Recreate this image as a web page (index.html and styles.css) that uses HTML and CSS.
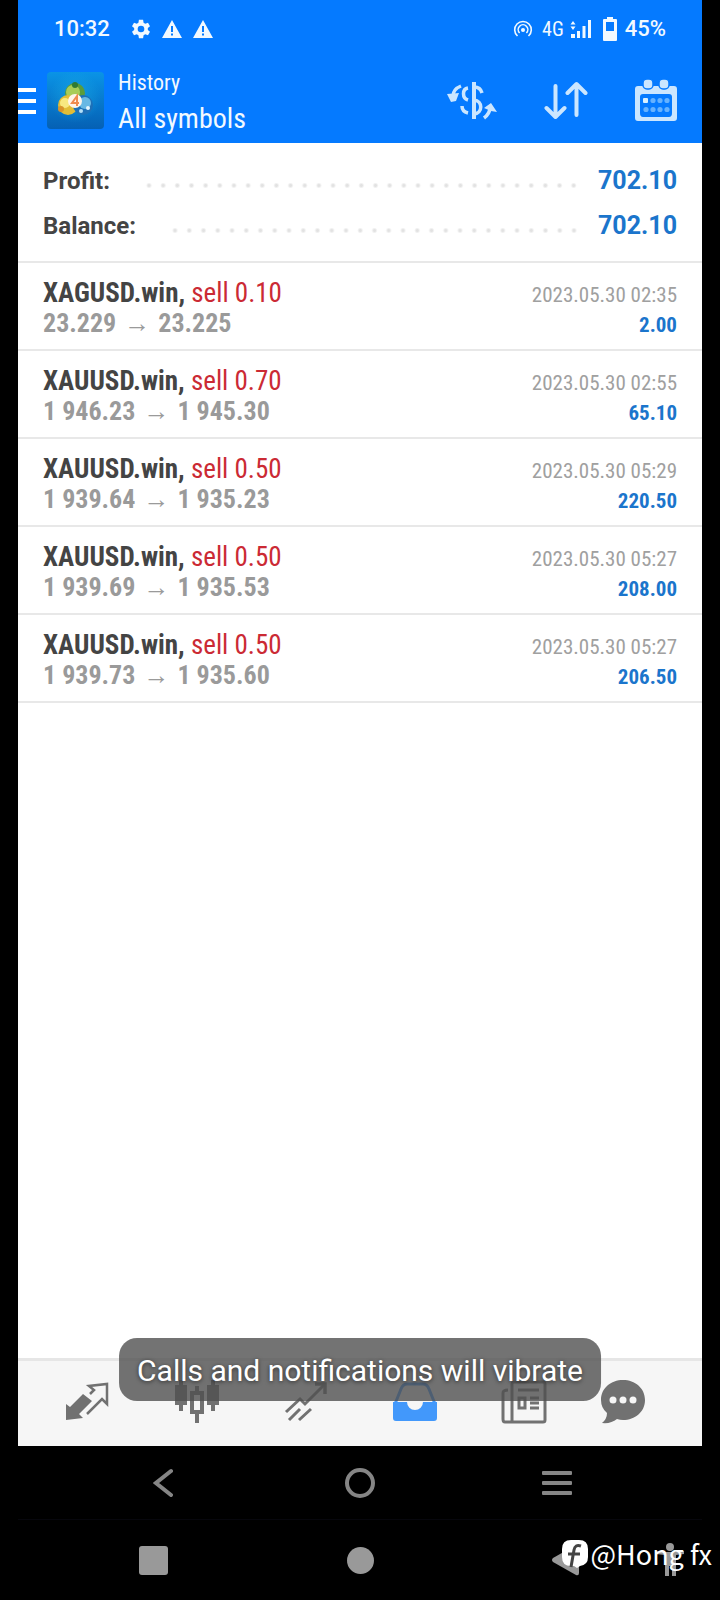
FILE: index.html
```html
<!DOCTYPE html>
<html lang="en">
<head>
<meta charset="utf-8">
<meta name="viewport" content="width=device-width, initial-scale=1">
<title>History</title>
<link rel="stylesheet" href="styles.css">
</head>
<body>
<div class="screen">
  <header class="top">
    <div class="status">
      <span class="clock">10:32</span>
      <svg class="gear" width="20" height="20" viewBox="0 0 24 24"><path fill="currentColor" fill-rule="evenodd" d="M9.500 1h5l.6 3.400 2 1.200 3.300-1.200 2.400 4.200-2.600 2.200v2.400l2.600 2.200-2.400 4.200-3.300-1.200-2 1.200-.6 3.400h-5l-.6-3.400-2-1.200-3.300 1.200-2.400-4.200 2.600-2.200v-2.400L1.200 8.600l2.400-4.200 3.300 1.200 2-1.200zM12 8a4 4 0 1 0 0 8 4 4 0 0 0 0-8z"/></svg>
      <svg class="warn" width="20" height="18" viewBox="0 0 20 18"><path fill="currentColor" fill-rule="evenodd" d="M10 0l10 18H0zM9 6v6h2V6zm0 7.500v2h2v-2z"/></svg>
      <svg class="warn" width="20" height="18" viewBox="0 0 20 18"><path fill="currentColor" fill-rule="evenodd" d="M10 0l10 18H0zM9 6v6h2V6zm0 7.500v2h2v-2z"/></svg>
      <span class="fill"></span>
      <svg width="20" height="18" viewBox="0 0 20 18" fill="none" stroke="currentColor" stroke-width="1.600"><path d="M4.500 16A8.300 8.300 0 1 1 15.500 16M6.600 13A4.800 4.800 0 1 1 13.400 13"/><circle cx="10" cy="10" r="2" fill="currentColor" stroke="none"/></svg>
      <span class="network">4G</span>
      <svg width="22" height="20" viewBox="0 0 22 20" fill="currentColor"><path d="M3 2l2.500 3.500h-5zM3 11L.5 7.500h5zM1 15h4v4H1zM7 12h3v7H7zM12.500 7h3v12h-3zM18 1h3v18h-3z"/></svg>
      <svg class="battery" width="16" height="24" viewBox="0 0 16 24"><path fill="currentColor" fill-rule="evenodd" d="M5 0h6v2h3q1 0 1 1v20q0 1-1 1H2q-1 0-1-1V3q0-1 1-1h3zM4 5v9h8V5z"/></svg>
      <span class="clock">45%</span>
    </div>
    <div class="appbar">
      <button class="icon-button" aria-label="Menu"><svg width="18" height="28" viewBox="0 0 18 28" fill="#fff"><path d="M0 1h18v4H0zM0 12h18v4H0zM0 23h18v4H0z"/></svg></button>
      <svg class="logo" width="57" height="57" viewBox="0 0 57 57">
        <defs>
          <linearGradient id="sky" x1="0" y1="0" x2="0" y2="1"><stop offset="0" stop-color="#0a94e6"/><stop offset="1" stop-color="#0560b4"/></linearGradient>
          <radialGradient id="glow"><stop offset="0" stop-color="#20b8e8"/><stop offset="1" stop-color="#20b8e8" stop-opacity="0"/></radialGradient>
        </defs>
        <rect width="57" height="57" rx="4" fill="url(#sky)"/>
        <circle cx="28" cy="25" r="26" fill="url(#glow)" opacity=".5"/>
        <circle cx="28" cy="21" r="10" fill="#5a9c3c"/><circle cx="26" cy="20" r="7" fill="#a8cc58"/><circle cx="28" cy="13" r="3" fill="#2f7a35"/>
        <circle cx="21" cy="33" r="10" fill="#e2bd36"/><circle cx="18" cy="31" r="5" fill="#f8e880"/><circle cx="14" cy="37" r="3" fill="#d8942c"/>
        <circle cx="36" cy="33" r="10" fill="#1d70b8"/><circle cx="38" cy="31" r="6" fill="#68b8e4"/><circle cx="41" cy="36" r="2" fill="#e4f6ff"/><circle cx="34" cy="39" r="2" fill="#b4e0f8"/>
        <circle cx="28" cy="29" r="7" fill="#fff4ea"/><path d="M30 34V24l-5 7h7" fill="none" stroke="#f08a50" stroke-width="2"/>
      </svg>
      <div class="titles"><span class="overline">History</span><h1 class="title">All symbols</h1></div>
      <div class="actions">
        <button class="icon-button" aria-label="Currency"><svg width="50" height="40" viewBox="0 0 50 40" fill="none" stroke="#cbe6ff" stroke-width="3.500"><path stroke-width="4" d="M27 1v37"/><path d="M27 6c5 0 7 2 8 6M27 19c9 1 9 13 0 14M21 7c-6 1-6 10 0 12M15 25c0 4 2 6 6 7"/><path d="M14 5C9 7 6 10 6 15M37 37c4-3 6-6 6-11"/><path fill="#cbe6ff" stroke="none" d="M0 13l12-1-3 8-5 1zM37 27l7-5 6 9-6-1z"/></svg></button>
        <button class="icon-button sort" aria-label="Sort"><svg width="44" height="40" viewBox="0 0 44 40" fill="none" stroke="#cbe6ff" stroke-width="4" stroke-linecap="round" stroke-linejoin="round"><path d="M11.500 5v31M2.500 27l9 9 9-9M32.500 34V4M23.500 12l9-9 9 9"/></svg></button>
        <button class="icon-button" aria-label="Select dates"><svg width="42" height="44" viewBox="0 0 42 44"><path fill="#cbe6ff" fill-rule="evenodd" d="M3 7h36q3 0 3 3v29q0 3-3 3H3q-3 0-3-3V10q0-3 3-3zM8 15q-3 0-3 3v16q0 4 3 4h26q3 0 3-4V18q0-3-3-3z"/><rect x="8" y="0" width="10" height="10" rx="4" fill="#cbe6ff" stroke="#057aff" stroke-width="1.500"/><rect x="24" y="0" width="10" height="10" rx="4" fill="#cbe6ff" stroke="#057aff" stroke-width="1.500"/><g fill="#66b2ff"><rect x="8" y="19" width="5" height="5" rx="1" fill="#d8f0ff"/><circle cx="18" cy="21.500" r="2.600"/><circle cx="25" cy="21.500" r="2.600"/><circle cx="32" cy="21.500" r="2.600"/><circle cx="11" cy="30.500" r="2.600"/><circle cx="18" cy="30.500" r="2.600"/><circle cx="25" cy="30.500" r="2.600"/><circle cx="32" cy="30.500" r="2.600"/></g></svg></button>
      </div>
    </div>
  </header>

  <main class="content">
    <dl class="summary">
      <div class="total"><dt>Profit:</dt><dd class="dots"></dd><dd class="sum">702.10</dd></div>
      <div class="total"><dt>Balance:</dt><dd class="dots"></dd><dd class="sum">702.10</dd></div>
    </dl>
    <ul class="deals">
      <li class="deal"><span class="symbol"><b>XAGUSD.win,</b> <span class="side">sell 0.10</span></span><time class="time">2023.05.30 02:35</time><span class="prices">23.229 <span class="arrow">→</span> 23.225</span><span class="gain">2.00</span></li>
      <li class="deal"><span class="symbol"><b>XAUUSD.win,</b> <span class="side">sell 0.70</span></span><time class="time">2023.05.30 02:55</time><span class="prices">1 946.23 <span class="arrow">→</span> 1 945.30</span><span class="gain">65.10</span></li>
      <li class="deal"><span class="symbol"><b>XAUUSD.win,</b> <span class="side">sell 0.50</span></span><time class="time">2023.05.30 05:29</time><span class="prices">1 939.64 <span class="arrow">→</span> 1 935.23</span><span class="gain">220.50</span></li>
      <li class="deal"><span class="symbol"><b>XAUUSD.win,</b> <span class="side">sell 0.50</span></span><time class="time">2023.05.30 05:27</time><span class="prices">1 939.69 <span class="arrow">→</span> 1 935.53</span><span class="gain">208.00</span></li>
      <li class="deal"><span class="symbol"><b>XAUUSD.win,</b> <span class="side">sell 0.50</span></span><time class="time">2023.05.30 05:27</time><span class="prices">1 939.73 <span class="arrow">→</span> 1 935.60</span><span class="gain">206.50</span></li>
    </ul>
  </main>

  <nav class="tabs">
    <button class="icon-button" aria-label="Quotes"><svg width="46" height="40" viewBox="0 0 46 40"><path fill="#717171" d="M1 38V22l4 3L18 12l9 7-13 13 4 4z"/><path fill="none" stroke="#717171" stroke-width="2.500" d="M22 32l15-15 5 5V2L24 4l5 4-4 4"/></svg></button>
    <button class="icon-button" aria-label="Chart"><svg width="46" height="46" viewBox="0 0 46 46" fill="#717171"><path d="M5 1h4v5h4v20H9v6H5v-6H1V6h4zM37 1h4v5h4v20h-4v6h-4v-6h-4V6h4z"/><path fill-rule="evenodd" d="M21 7h4v5h5v23h-5v9h-4v-9h-5V12h5zM20 16v15h6V16z"/></svg></button>
    <button class="icon-button" aria-label="Trade"><svg width="44" height="40" viewBox="0 0 44 40" fill="none" stroke="#717171" stroke-width="3"><path d="M2 30l14-13 5 5L40 3M5 38l11-11M15 38l12-11"/><path d="M31 2h10v10" stroke-width="3.500"/></svg></button>
    <button class="icon-button" aria-label="History"><svg width="44" height="40" viewBox="0 0 44 40"><path d="M2 22L8 7q2-5 6-5h16q4 0 6 5l6 15" fill="none" stroke="#4298fb" stroke-width="3"/><path fill="#4298fb" d="M0 20h14a8 8 0 0 0 16 0h14v16q0 3-3 3H3q-3 0-3-3z"/></svg></button>
    <button class="icon-button" aria-label="News"><svg width="46" height="44" viewBox="0 0 46 44" fill="none" stroke="#717171" stroke-width="3"><path d="M11 42H4q-2 0-2-3V13q0-3 5-3M11 42V4q0-2 2-2h29q2 0 2 2v36q0 2-2 2z"/><path d="M17 10h21M18 18h6v10h-6zM29 18h9M29 23h9M29 28h9"/></svg></button>
    <button class="icon-button" aria-label="Messages"><svg width="44" height="44" viewBox="0 0 44 44"><path fill="#717171" d="M22 0c12 0 22 8 22 20s-10 20-22 20q-3 0-6-1-6 5-15 4 5-4 5-10Q0 28 0 20C0 8 10 0 22 0z"/><circle cx="12" cy="20" r="3.500" fill="#f6f6f6"/><circle cx="22" cy="20" r="3.500" fill="#f6f6f6"/><circle cx="32" cy="20" r="3.500" fill="#f6f6f6"/></svg></button>
  </nav>

  <nav class="inner-nav">
    <button class="icon-button" aria-label="Back"><svg width="20" height="30" viewBox="0 0 20 30" fill="none" stroke="#858585" stroke-width="4" stroke-linecap="round"><path d="M18 3L3 15l15 12"/></svg></button>
    <button class="icon-button" aria-label="Home"><svg width="32" height="32" viewBox="0 0 32 32"><circle cx="16" cy="16" r="13" fill="none" stroke="#858585" stroke-width="4"/></svg></button>
    <button class="icon-button" aria-label="Recent apps"><svg width="32" height="26" viewBox="0 0 32 26" fill="#858585"><rect x="1" y="1" width="30" height="4" rx="1"/><rect x="1" y="11" width="30" height="4" rx="1"/><rect x="1" y="21" width="30" height="4" rx="1"/></svg></button>
  </nav>
</div>

<nav class="outer-nav">
  <div class="keys">
    <button class="icon-button" aria-label="Overview"><svg width="29" height="29" viewBox="0 0 29 29"><rect width="29" height="29" rx="3" fill="#999"/></svg></button>
    <button class="icon-button" aria-label="Home screen"><svg width="27" height="27" viewBox="0 0 27 27"><circle cx="13.500" cy="13.500" r="13.500" fill="#999"/></svg></button>
    <button class="icon-button" aria-label="Go back"><svg width="27" height="32" viewBox="0 0 27 32"><path fill="#999" d="M1 14L24 1q3-1 3 2v26q0 3-3 2L1 18q-2-2 0-4z"/></svg></button>
  </div>
  <button class="icon-button" aria-label="Accessibility"><svg width="28" height="34" viewBox="0 0 28 34" fill="#999"><circle cx="14" cy="4" r="4"/><path d="M0 8l9 1h10l9-1v3l-8 1v21h-4V23h-3v10H9V12l-9-1z"/></svg></button>
</nav>

<div class="toast" role="status">Calls and notifications will vibrate</div>
<div class="watermark">
  <svg width="26" height="28" viewBox="0 0 26 28"><path fill="#fff" d="M9 0h8q9 0 9 9v8q0 8-8 9l-3 2-3-2H9q-9 0-9-9V9q0-9 9-9z"/><path fill="none" stroke="#444" stroke-width="3" d="M19 6q-6-2-7 4l-3 17M6 14h12"/></svg>
  <span>@Hong fx</span>
</div>
</body>
</html>
```
FILE: styles.css
```css
* { box-sizing: border-box; }
body {
  position: relative;
  display: flex;
  flex-direction: column;
  min-height: 100vh;
  margin: 0;
  background: #000;
  font-family: Roboto, "Liberation Sans", sans-serif;
}
svg { display: block; flex: none; }
.icon-button { flex: none; padding: 0; border: 0; background: none; }
.screen {
  flex: 1;
  display: flex;
  flex-direction: column;
  margin: 0 18px;
}
.top { background: #057aff; color: #f2f9ff; }
.status {
  display: flex;
  align-items: center;
  height: 58px;
  padding: 0 36px;
}
.clock { font-size: 22px; font-weight: 500; line-height: 28px; }
.gear { margin-left: 21px; }
.warn { margin-left: 11px; }
.fill { flex: 1; }
.network {
  margin: 0 6px 0 9px;
  font-family: "Roboto Condensed", "Liberation Sans Narrow", Roboto, sans-serif;
  font-size: 20px;
  font-weight: 400;
}
.battery { margin: 0 7px 0 10px; }
.appbar {
  display: flex;
  align-items: center;
  height: 85px;
  padding-right: 25px;
}
.logo { margin: 0 14px 0 11px; }
.titles {
  display: flex;
  flex-direction: column;
  font-family: "Roboto Condensed", "Liberation Sans Narrow", Roboto, sans-serif;
}
.overline { font-size: 22px; line-height: 36px; }
.title { margin: 0; font-size: 28px; font-weight: 400; line-height: 36px; }
.actions {
  display: flex;
  flex: 1;
  align-items: center;
  justify-content: flex-end;
  gap: 47px;
}
.content { flex: 1; background: #fff; }
.summary { margin: 0; padding: 15px 25px 13px; border-bottom: 2px solid #e8e8e8; }
.total {
  display: flex;
  align-items: center;
  height: 45px;
  color: #444;
  font-size: 24px;
  font-weight: 700;
  line-height: 30px;
}
.dots {
  flex: 1;
  height: 5px;
  margin: 10px 17px 0 32px;
  background: radial-gradient(circle, #e2e2e2 1px, transparent 3px) 0 0 / 14px 5px space;
}
.sum { margin: 0; color: #1b75cc; font-size: 25px; }
.deals { margin: 0; padding: 0; list-style: none; }
.deal {
  display: grid;
  grid-template-columns: 1fr auto;
  grid-auto-rows: 30px;
  align-items: baseline;
  padding: 15px 25px 11px;
  border-bottom: 2px solid #e8e8e8;
  font-family: "Roboto Condensed", "Liberation Sans Narrow", Roboto, sans-serif;
  font-size: 27px;
  line-height: 30px;
}
.symbol b { color: #444; }
.side { color: #cb2a34; }
.time { color: #a0a0a0; font-size: 21px; }
.prices { color: #9a9a9a; font-size: 26px; font-weight: 700; }
.arrow { margin: 0 2px; line-height: 1; }
.gain { color: #1b75cc; font-size: 21px; font-weight: 700; text-align: right; }
.tabs {
  display: grid;
  grid-template-columns: repeat(5, 109fr) 89fr;
  align-items: center;
  justify-items: center;
  height: 88px;
  padding: 0 35px 3px 15px;
  border-top: 3px solid #e6e6e6;
  background: #f6f6f6;
}
.inner-nav {
  display: grid;
  grid-template-columns: repeat(3, 1fr);
  align-items: center;
  justify-items: center;
  height: 74px;
  padding: 0 46px;
  border-bottom: 1px solid #07070d;
}
.outer-nav {
  display: flex;
  align-items: center;
  height: 80px;
  padding: 0 36px 0 139px;
}
.keys {
  display: flex;
  flex: 1;
  align-items: center;
  justify-content: space-between;
  margin-right: 77px;
}
.toast {
  position: absolute;
  bottom: 199px;
  left: 50%;
  padding: 15px 18px 13px;
  border-radius: 18px;
  background: rgba(80, 80, 80, .8);
  color: #fff;
  font-size: 30px;
  line-height: 35px;
  text-shadow: 0 1px 4px rgba(0, 0, 0, .6);
  white-space: nowrap;
  transform: translateX(-50%);
}
.watermark {
  position: absolute;
  right: 8px;
  bottom: 28px;
  display: flex;
  align-items: center;
  gap: 3px;
  color: #fff;
  font-family: "Noto Sans CJK SC", "Noto Sans", sans-serif;
  font-size: 27px;
  font-weight: 400;
  line-height: 36px;
}
```
